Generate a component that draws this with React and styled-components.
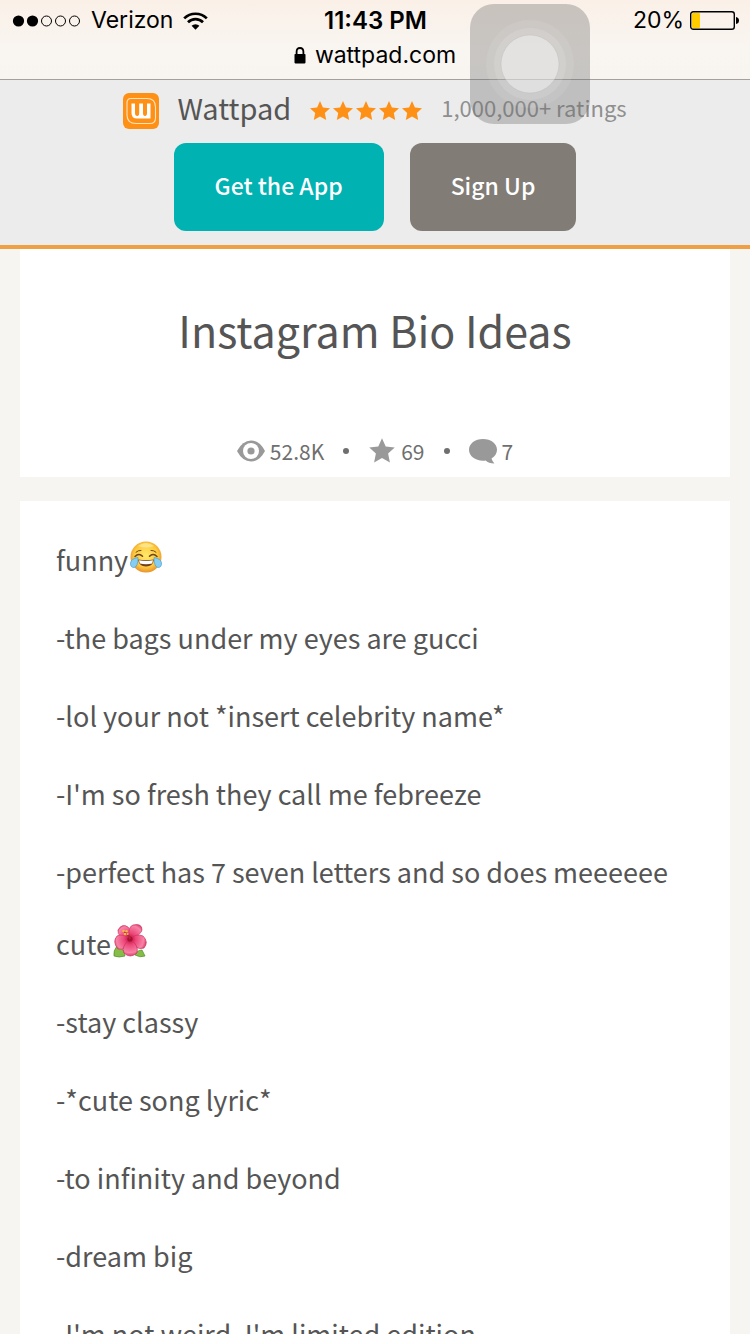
import styled, { createGlobalStyle } from "styled-components";

const GlobalStyle = createGlobalStyle`
    * {
        box-sizing: border-box;
    }

    body {
        margin: 0;
        background: #f6f5f1;
        color: #555555;
        font-family: "Noto Sans CJK SC", "Noto Sans", sans-serif;
    }
`

const Screen = styled.div`
    height: 100vh;
    overflow: hidden;
`

const BrowserBar = styled.header`
    height: 80px;
    background: linear-gradient(#faf0e8, #f9f5f0 60%, #f8f5f1);
    border-bottom: 1px solid #a3a09e;
    color: #000000;
    font-family: Inter, "Liberation Sans", sans-serif;
    font-size: 23px;
`

const StatusRow = styled.div`
    display: grid;
    grid-template-columns: 1fr auto 1fr;
    align-items: center;
    height: 41px;
    padding: 0 11px 0 12px;
    line-height: 41px;
`

const StatusGroup = styled.div`
    display: flex;
    align-items: center;
    justify-content: ${({ $end }) => ($end ? "flex-end" : "flex-start")};
    gap: ${({ $gap }) => $gap}px;
`

const Clock = styled.time`
    font-size: 24px;
    font-weight: 600;
`

const AddressRow = styled.div`
    display: flex;
    justify-content: center;
    align-items: center;
    gap: 9px;
    height: 28px;
    line-height: 28px;
`

const Banner = styled.section`
    height: 169px;
    padding-top: 9px;
    background: #ececec;
    border-bottom: 4px solid #f0a044;
`

const BannerInfo = styled.div`
    display: flex;
    justify-content: center;
    align-items: center;
    gap: 18px;
    height: 44px;
`

const BrandName = styled.span`
    padding-bottom: 8px;
    font-size: 29px;
    line-height: 36px;
`

const Stars = styled.div`
    display: flex;
    gap: 1px;
`

const Ratings = styled.span`
    padding-bottom: 8px;
    color: #8f8f8f;
    font-size: 22px;
    line-height: 36px;
`

const BannerActions = styled.div`
    display: flex;
    justify-content: center;
    gap: 26px;
    margin-top: 10px;
`

const ActionButton = styled.button`
    height: 88px;
    padding: 0 41px 4px;
    border: 0;
    border-radius: 12px;
    background: ${({ $color }) => $color};
    color: #ffffff;
    font-family: inherit;
    font-size: 23px;
    font-weight: 500;
`

const Card = styled.section`
    margin: 0 20px 24px;
    background: #ffffff;
`

const StoryHeader = styled(Card)`
    padding: 47px 20px 0;
    height: 228px;
    text-align: center;
`

const Title = styled.h1`
    margin: 0;
    font-size: 43px;
    font-weight: 400;
    line-height: 66px;
`

const Stats = styled.div`
    display: flex;
    justify-content: center;
    align-items: center;
    gap: 19px;
    margin-top: 72px;
    color: #6f6f6f;
    font-size: 21px;
    line-height: 34px;
`

const Stat = styled.span`
    display: flex;
    align-items: center;
    gap: 5px;
`

const Dot = styled.span`
    width: 6px;
    height: 6px;
    border-radius: 50%;
    background: #6f6f6f;
`

const Story = styled(Card)`
    padding: 38px 36px;
`

const Group = styled.div`
    margin-bottom: 30px;
`

const Line = styled.p`
    display: flex;
    align-items: center;
    gap: 2px;
    margin: 0 0 36px;
    font-size: 27px;
    line-height: 42px;

    &:last-child {
        margin-bottom: 0;
    }
`

const EmojiSvg = styled.svg`
    margin-bottom: 6px;
`

const TouchButton = styled.button`
    position: fixed;
    top: 4px;
    right: 160px;
    display: grid;
    place-items: center;
    width: 120px;
    height: 120px;
    padding: 0;
    border: 0;
    border-radius: 24px;
    background: rgba(105, 105, 105, 0.34);
`

const STAR = "M11 1 L13.9 7.5 L21 8.3 L15.8 13 L17.2 20 L11 16.5 L4.8 20 L6.2 13 L1 8.3 L8.1 7.5 Z"

const GROUPS = [
    {
        name: "funny",
        emoji: "joy",
        lines: [
            "-the bags under my eyes are gucci",
            "-lol your not *insert celebrity name*",
            "-I'm so fresh they call me febreeze",
            "-perfect has 7 seven letters and so does meeeeee",
        ],
    },
    {
        name: "cute",
        emoji: "hibiscus",
        lines: [
            "-stay classy",
            "-*cute song lyric*",
            "-to infinity and beyond",
            "-dream big",
            "-I'm not weird, I'm limited edition",
        ],
    },
]

const SignalDots = () => (
    <svg width="69" height="12" viewBox="0 0 69 12" aria-hidden="true">
        {[0, 1, 2, 3, 4].map((dot) => (
            <circle key={dot} cx={6.5 + dot * 14} cy="6" r={dot < 2 ? 5.6 : 5} fill={dot < 2 ? "#000" : "none"} stroke="#000" strokeWidth={dot < 2 ? 0 : 1} />
        ))}
    </svg>
)

const WifiIcon = () => (
    <svg width="25" height="18" viewBox="0 0 25 18" aria-hidden="true">
        <g fill="none" stroke="#000" strokeWidth="2.7">
            <path d="M1.2 6.4 A16 16 0 0 1 23.8 6.4" />
            <path d="M5 10.3 A10.6 10.6 0 0 1 20 10.3" />
        </g>
        <path d="M8.6 13.8 A5.5 5.5 0 0 1 16.4 13.8 L12.5 17.8 Z" />
    </svg>
)

const BatteryIcon = () => (
    <svg width="49" height="19" viewBox="0 0 49 19" aria-hidden="true">
        <rect x="0.7" y="0.7" width="43.6" height="17.6" rx="2.6" fill="none" stroke="#000" strokeWidth="1.4" />
        <rect x="2" y="2" width="8" height="15" rx="1" fill="#ffcc00" />
        <path d="M46 6 Q49 6.5 49 9.5 Q49 12.5 46 13 Z" />
    </svg>
)

const LockIcon = () => (
    <svg width="12" height="17" viewBox="0 0 12 17" aria-hidden="true">
        <path d="M2.6 8 V4.8 Q2.6 1 6 1 Q9.4 1 9.4 4.8 V8" fill="none" stroke="#000" strokeWidth="1.8" />
        <rect x="0.5" y="7" width="11" height="9.4" rx="0.8" />
    </svg>
)

const WattpadLogo = () => (
    <svg width="36" height="36" viewBox="0 0 36 36" aria-hidden="true">
        <rect width="36" height="36" rx="6" fill="#ff9016" />
        <path d="M8 5.5 H24 Q32.5 5.5 32.5 14 V25 Q32.5 30.5 27 30.5 H13 Q4 30.5 4 22 V10 Q4 5.5 8 5.5 Z" fill="none" stroke="#ffe3bf" strokeWidth="1.1" />
        <path d="M8.5 10.5 H12 V20 Q12 23 14.3 23 Q16.2 23 16.2 20 V10.5 H20 V20 Q20 23 22 23 Q24 23 24 20 V10.5 H27.5 V25.5 H14 Q8.5 25.5 8.5 20 Z" fill="#fff" />
    </svg>
)

const StarIcon = ({ size, color }) => (
    <svg width={size} height={size} viewBox="0 0 22 22" aria-hidden="true">
        <path d={STAR} fill={color} />
    </svg>
)

const EyeIcon = () => (
    <svg width="28" height="22" viewBox="0 0 28 22" aria-hidden="true">
        <path d="M0 11 Q5.5 0.5 14 0.5 Q22.5 0.5 28 11 Q22.5 21.5 14 21.5 Q5.5 21.5 0 11 Z" fill="#999" />
        <circle cx="14" cy="11" r="8" fill="#fff" />
        <circle cx="14" cy="11" r="3.6" fill="#999" />
    </svg>
)

const CommentIcon = () => (
    <svg width="28" height="25" viewBox="0 0 28 25" aria-hidden="true">
        <path d="M14 0 C22 0 28 4.6 28 10.8 C28 14.4 26 17.6 22.5 19.6 Q23.4 22.6 25.4 24.6 Q19.4 24.2 16.6 21.4 Q15.4 21.7 14 21.7 C6 21.7 0 17 0 10.8 C0 4.6 6 0 14 0 Z" fill="#999" />
    </svg>
)

const JoyEmoji = () => (
    <EmojiSvg width="32" height="33" viewBox="0 0 32 33" role="img" aria-label="😂">
        <defs>
            <radialGradient id="joyFace" cx="50%" cy="45%" r="55%">
                <stop offset="0" stopColor="#ffe96b" />
                <stop offset="0.7" stopColor="#fdc83d" />
                <stop offset="1" stopColor="#e7912d" />
            </radialGradient>
        </defs>
        <circle cx="16" cy="16" r="15.5" fill="url(#joyFace)" />
        <path d="M8 5 Q16 -1 24 5 Q16 8 8 5 Z" fill="#fff1b0" opacity="0.6" />
        <path d="M8 18.6 Q16 20 24 18.6 Q23 25.5 16 25.5 Q9 25.5 8 18.6 Z" fill="#73401c" />
        <path d="M9 19.3 Q16 20.5 23 19.3 L22.2 22.6 Q16 23.8 9.8 22.6 Z" fill="#fff" />
        <g fill="none" stroke="#70451d" strokeWidth="1.5" strokeLinecap="round">
            <path d="M5 15.5 Q9 11.5 12.5 15.2" />
            <path d="M19.5 15.2 Q23 11.5 27 15.5" />
            <path d="M6 11.2 Q8 9.2 11 9.4" strokeWidth="1" />
            <path d="M21 9.4 Q24 9.2 26 11.2" strokeWidth="1" />
        </g>
        <path d="M8 16.5 Q1 17.5 0.5 22 Q0.3 26.5 4 26.5 Q8 26 8 16.5 Z" fill="#86cdf4" stroke="#4da0d3" strokeWidth="0.7" />
        <path d="M24 16.5 Q31 17.5 31.5 22 Q31.7 26.5 28 26.5 Q24 26 24 16.5 Z" fill="#86cdf4" stroke="#4da0d3" strokeWidth="0.7" />
    </EmojiSvg>
)

const HibiscusEmoji = () => (
    <EmojiSvg width="34" height="34" viewBox="0 0 34 34" role="img" aria-label="🌺">
        <defs>
            <radialGradient id="petals" gradientUnits="userSpaceOnUse" cx="17" cy="15" r="17">
                <stop offset="0" stopColor="#b9093f" />
                <stop offset="0.35" stopColor="#ed4778" />
                <stop offset="0.8" stopColor="#f783a7" />
                <stop offset="1" stopColor="#d93d6b" />
            </radialGradient>
        </defs>
        <path d="M1 32 Q0 27 4 22 Q11 24 12 32 Q6 34 1 32 Z" fill="#85bd46" stroke="#4f8e2b" strokeWidth="0.7" />
        <path d="M22 31 Q24 26 29 26 L32 32 Q27 34 22 31 Z" fill="#85bd46" stroke="#4f8e2b" strokeWidth="0.7" />
        <g fill="url(#petals)" stroke="#cd315f" strokeWidth="0.7">
            <path d="M17 15 Q4 14 5 6 Q9 -1 15 3 Q19 7 17 15 Z" />
            <path d="M17 15 Q14 3 20 1 Q29 -1 29 6 Q28 11 17 15 Z" />
            <path d="M17 15 Q23 9 30 12 Q36 18 31 24 Q22 27 17 15 Z" />
            <path d="M17 15 Q10 9 4 12 Q-1 18 5 25 Q14 27 17 15 Z" />
            <path d="M17 15 Q8 22 11 29 Q17 35 24 29 Q26 21 17 15 Z" />
        </g>
        <circle cx="17" cy="15" r="2.6" fill="#a9122e" />
        <path d="M17 15 Q15 9 11 8" fill="none" stroke="#b5263d" strokeWidth="2" />
        <g fill="#f7b44c">
            <circle cx="10.5" cy="7" r="1.3" />
            <circle cx="13.5" cy="7.2" r="1.2" />
            <circle cx="12" cy="10" r="1.3" />
            <circle cx="14.6" cy="10" r="1.1" />
        </g>
    </EmojiSvg>
)

const EMOJIS = { joy: JoyEmoji, hibiscus: HibiscusEmoji }

const LineGroup = ({ name, emoji, lines }) => {
    const Emoji = EMOJIS[emoji]
    return (
        <Group>
            <Line>
                {name}
                <Emoji />
            </Line>
            {lines.map((line) => (
                <Line key={line}>{line}</Line>
            ))}
        </Group>
    )
}

const App = () => {
  return (
    <Screen>
        <GlobalStyle />
        <BrowserBar>
            <StatusRow>
                <StatusGroup $gap={10}>
                    <SignalDots />
                    Verizon
                    <WifiIcon />
                </StatusGroup>
                <Clock>11:43 PM</Clock>
                <StatusGroup $gap={6} $end>
                    20%
                    <BatteryIcon />
                </StatusGroup>
            </StatusRow>
            <AddressRow>
                <LockIcon />
                wattpad.com
            </AddressRow>
        </BrowserBar>
        <Banner>
            <BannerInfo>
                <WattpadLogo />
                <BrandName>Wattpad</BrandName>
                <Stars>
                    {[0, 1, 2, 3, 4].map((star) => (
                        <StarIcon key={star} size={22} color="#ff9016" />
                    ))}
                </Stars>
                <Ratings>1,000,000+ ratings</Ratings>
            </BannerInfo>
            <BannerActions>
                <ActionButton $color="#00b2b2">Get the App</ActionButton>
                <ActionButton $color="#827c77">Sign Up</ActionButton>
            </BannerActions>
        </Banner>
        <main>
            <StoryHeader>
                <Title>Instagram Bio Ideas</Title>
                <Stats>
                    <Stat><EyeIcon />52.8K</Stat>
                    <Dot />
                    <Stat><StarIcon size={28} color="#999" />69</Stat>
                    <Dot />
                    <Stat><CommentIcon />7</Stat>
                </Stats>
            </StoryHeader>
            <Story>
                {GROUPS.map((group) => (
                    <LineGroup key={group.name} {...group} />
                ))}
            </Story>
        </main>
        <TouchButton aria-label="AssistiveTouch">
            <svg width="90" height="90" viewBox="0 0 90 90" aria-hidden="true">
                <circle cx="45" cy="45" r="44" fill="#fff" fillOpacity="0.07" />
                <circle cx="45" cy="45" r="36" fill="#fff" fillOpacity="0.12" />
                <circle cx="45" cy="45" r="29" fill="#fff" fillOpacity="0.38" stroke="#aaa" strokeOpacity="0.25" />
            </svg>
        </TouchButton>
    </Screen>
  )
}

export default App
